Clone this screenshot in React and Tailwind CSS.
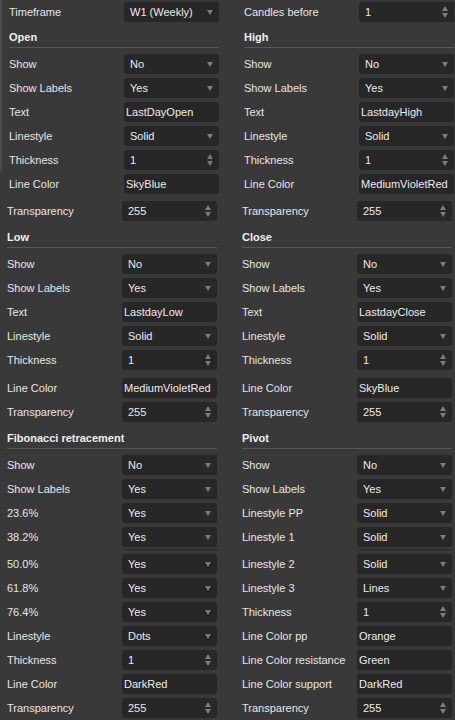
import React from 'react';

const font = { fontFamily: '"Liberation Sans", Arial, sans-serif' };

function Arrow() {
  return (
    <svg width="6" height="5" viewBox="0 0 6 5" className="absolute right-[6px] top-[8px]">
      <polygon points="0,0 6,0 3,5" fill="#7c7c7c" />
    </svg>
  );
}

function Spin() {
  return (
    <svg width="6" height="12" viewBox="0 0 6 12" className="absolute right-[6px] top-[4px]">
      <polygon points="3,0 6,5 0,5" fill="#7c7c7c" />
      <polygon points="0,7 6,7 3,12" fill="#7c7c7c" />
    </svg>
  );
}

function Control({ type, value }) {
  const pad = type === 'text' ? 'pl-[2px]' : 'pl-[6px]';
  return (
    <div className={`relative h-[20px] w-[95px] rounded-[3px] bg-[#272727] ${pad} flex items-center text-[11px] text-[#ececec] leading-none`}>
      <span>{value}</span>
      {type === 'select' && <Arrow />}
      {type === 'spin' && <Spin />}
    </div>
  );
}

function Cell({ item, left }) {
  if (!item) return <div className={left ? 'w-[227px]' : 'flex-1'} />;
  const [label, type, value] = item;
  return (
    <div className={`flex items-center ${left ? 'w-[227px] pl-[7px]' : 'flex-1 pl-[15px]'}`}>
      <div className="w-[115px] text-[11px] text-[#e6e6e6] whitespace-nowrap">{label}</div>
      <Control type={type} value={value} />
    </div>
  );
}

function Row({ l, r, className = '' }) {
  return (
    <div className={`flex h-[24px] ${className}`}>
      <Cell item={l} left />
      <Cell item={r} />
    </div>
  );
}

function Header({ l, r, className = '' }) {
  return (
    <div className={`flex h-[24px] mb-[4px] ${className}`}>
      <div className="w-[227px] pl-[7px]">
        <div className="w-[210px] h-[24px] border-b border-[#575757] flex items-center pt-[3px] text-[11px] font-bold text-[#efefef]">
          {l}
        </div>
      </div>
      <div className="flex-1 pl-[15px]">
        <div className="w-[210px] h-[24px] border-b border-[#575757] flex items-center pt-[3px] text-[11px] font-bold text-[#efefef]">
          {r}
        </div>
      </div>
    </div>
  );
}

export default function App() {
  return (
    <div className="w-[455px] h-[720px] overflow-hidden bg-[#393939]" style={font}>
      {/* top block, slightly offset */}
      <div className="border-l-2 border-[#4b4b4b]">
        <Row l={['Timeframe', 'select', 'W1 (Weekly)']} r={['Candles before', 'spin', '1']} />
        <Header l="Open" r="High" />
        <Row l={['Show', 'select', 'No']} r={['Show', 'select', 'No']} />
        <Row l={['Show Labels', 'select', 'Yes']} r={['Show Labels', 'select', 'Yes']} />
        <Row l={['Text', 'text', 'LastDayOpen']} r={['Text', 'text', 'LastdayHigh']} />
        <Row l={['Linestyle', 'select', 'Solid']} r={['Linestyle', 'select', 'Solid']} />
        <Row l={['Thickness', 'spin', '1']} r={['Thickness', 'spin', '1']} />
      </div>
      <div className="pl-[2px]">
        <Row l={['Line Color', 'text', 'SkyBlue']} r={['Line Color', 'text', 'MediumVioletRed']} />
      </div>
      <Row className="mt-[3px]" l={['Transparency', 'spin', '255']} r={['Transparency', 'spin', '255']} />

      <Header className="mt-[1px]" l="Low" r="Close" />
      <Row l={['Show', 'select', 'No']} r={['Show', 'select', 'No']} />
      <Row l={['Show Labels', 'select', 'Yes']} r={['Show Labels', 'select', 'Yes']} />
      <Row l={['Text', 'text', 'LastdayLow']} r={['Text', 'text', 'LastdayClose']} />
      <Row l={['Linestyle', 'select', 'Solid']} r={['Linestyle', 'select', 'Solid']} />
      <Row l={['Thickness', 'spin', '1']} r={['Thickness', 'spin', '1']} />
      <Row className="mt-[4px]" l={['Line Color', 'text', 'MediumVioletRed']} r={['Line Color', 'text', 'SkyBlue']} />
      <Row l={['Transparency', 'spin', '255']} r={['Transparency', 'spin', '255']} />

      <Header className="mt-[1px]" l="Fibonacci retracement" r="Pivot" />
      <Row l={['Show', 'select', 'No']} r={['Show', 'select', 'No']} />
      <Row l={['Show Labels', 'select', 'Yes']} r={['Show Labels', 'select', 'Yes']} />
      <Row l={['23.6%', 'select', 'Yes']} r={['Linestyle PP', 'select', 'Solid']} />
      <Row l={['38.2%', 'select', 'Yes']} r={['Linestyle 1', 'select', 'Solid']} />
      <div className="flex h-[3px]">
        <div className="w-[227px] pl-[122px]">
          <div className="w-[96px] border-t border-[#2c2c2c]" />
        </div>
        <div className="flex-1 pl-[130px]">
          <div className="w-[95px] border-t border-[#2c2c2c]" />
        </div>
      </div>
      <Row l={['50.0%', 'select', 'Yes']} r={['Linestyle 2', 'select', 'Solid']} />
      <Row l={['61.8%', 'select', 'Yes']} r={['Linestyle 3', 'select', 'Lines']} />
      <Row l={['76.4%', 'select', 'Yes']} r={['Thickness', 'spin', '1']} />
      <Row l={['Linestyle', 'select', 'Dots']} r={['Line Color pp', 'text', 'Orange']} />
      <Row l={['Thickness', 'spin', '1']} r={['Line Color resistance', 'text', 'Green']} />
      <Row l={['Line Color', 'text', 'DarkRed']} r={['Line Color support', 'text', 'DarkRed']} />
      <Row l={['Transparency', 'spin', '255']} r={['Transparency', 'spin', '255']} />
    </div>
  );
}
